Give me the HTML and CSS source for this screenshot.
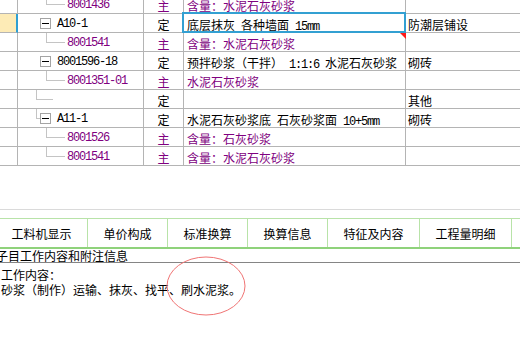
FILE: index.html
```html
<!DOCTYPE html>
<html>
<head>
<meta charset="utf-8">
<link rel="stylesheet" href="styles.css">
</head>
<body>
<div class="grid">
  <div class="row">
    <div class="c mark"></div>
    <div class="c tree child"><span class="elbow"></span><span class="code purple">8001436</span></div>
    <div class="c type purple">主</div>
    <div class="c name purple">含量：水泥石灰砂浆</div>
    <div class="c extra"></div>
  </div>
  <div class="row">
    <div class="c mark current"></div>
    <div class="c tree parent"><span class="box"></span><span class="code">A10-1</span></div>
    <div class="c type">定</div>
    <div class="c name selected">底层抹灰<span class="lat"> </span>各种墙面<span class="lat"> 15mm</span><span class="ring"></span><span class="flag"></span></div>
    <div class="c extra">防潮层铺设</div>
  </div>
  <div class="row">
    <div class="c mark"></div>
    <div class="c tree child"><span class="elbow"></span><span class="code purple">8001541</span></div>
    <div class="c type purple">主</div>
    <div class="c name purple">含量：水泥石灰砂浆</div>
    <div class="c extra"></div>
  </div>
  <div class="row">
    <div class="c mark"></div>
    <div class="c tree parent"><span class="box"></span><span class="code">8001596-18</span></div>
    <div class="c type">定</div>
    <div class="c name">预拌砂浆（干拌）<span class="lat"> 1:1:6 </span>水泥石灰砂浆</div>
    <div class="c extra">砌砖</div>
  </div>
  <div class="row">
    <div class="c mark"></div>
    <div class="c tree child"><span class="elbow"></span><span class="code purple">8001351-01</span></div>
    <div class="c type purple">主</div>
    <div class="c name purple">水泥石灰砂浆</div>
    <div class="c extra"></div>
  </div>
  <div class="row">
    <div class="c mark"></div>
    <div class="c tree outer"><span class="elbow long"></span></div>
    <div class="c type">定</div>
    <div class="c name"></div>
    <div class="c extra">其他</div>
  </div>
  <div class="row">
    <div class="c mark"></div>
    <div class="c tree outer"><span class="elbow short"></span><span class="box"></span><span class="code">A11-1</span></div>
    <div class="c type">定</div>
    <div class="c name">水泥石灰砂浆底<span class="lat"> </span>石灰砂浆面<span class="lat"> 10+5mm</span></div>
    <div class="c extra">砌砖</div>
  </div>
  <div class="row">
    <div class="c mark"></div>
    <div class="c tree child"><span class="elbow"></span><span class="code purple">8001526</span></div>
    <div class="c type purple">主</div>
    <div class="c name purple">含量：石灰砂浆</div>
    <div class="c extra"></div>
  </div>
  <div class="row">
    <div class="c mark"></div>
    <div class="c tree child"><span class="elbow"></span><span class="code purple">8001541</span></div>
    <div class="c type purple">主</div>
    <div class="c name purple">含量：水泥石灰砂浆</div>
    <div class="c extra"></div>
  </div>
</div>

<div class="tabs">
  <div class="tab first">工料机显示</div>
  <div class="tab">单价构成</div>
  <div class="tab">标准换算</div>
  <div class="tab">换算信息</div>
  <div class="tab wide">特征及内容</div>
  <div class="tab wide">工程量明细</div>
  <div class="tab rest"></div>
</div>

<div class="info-head">子目工作内容和附注信息</div>
<div class="info-body">
  <div class="line">工作内容：</div>
  <div class="line">砂浆（制作）运输、抹灰、找平、刷水泥浆。</div>
</div>

<svg class="circle" width="80" height="60" viewBox="0 0 80 60">
  <ellipse cx="40" cy="30" rx="39" ry="29" fill="none" stroke="#f07474" stroke-width="1"/>
</svg>
</body>
</html>
```
FILE: styles.css
```css
* { box-sizing: border-box; }
html, body { margin: 0; padding: 0; }
body {
  width: 520px;
  height: 358px;
  overflow: hidden;
  background: #fff;
  color: #000;
  font-family: "Noto Sans CJK SC", sans-serif;
  font-size: 12px;
  position: relative;
}
.grid {
  margin-top: -5px;
  height: 215px;
  border-bottom: 1px solid #dadada;
}
.row {
  display: grid;
  grid-template-columns: 18px 126px 40px 222px 1fr;
  height: 19px;
}
.c {
  height: 19px;
  border-right: 1px solid #b4b4b4;
  border-bottom: 1px solid #b4b4b4;
  padding-top: 2px;
  line-height: 17px;
  white-space: nowrap;
  overflow: hidden;
}
.c.extra { border-right: none; padding-left: 2px; }
.c.mark { padding: 0; }
.c.mark.current {
  background: #fdebb6;
  border-right: 2px solid #2f9fd2;
}
.c.type { text-align: center; }
.c.name { padding-left: 3px; }
.purple { color: #800080; }
.lat {
  font-family: "Liberation Mono", monospace;
  font-size: 12px;
  letter-spacing: -1.2px;
  white-space: pre;
}
.c.selected {
  position: relative;
  overflow: visible;
}
.ring {
  position: absolute;
  top: -2px;
  left: -2px;
  right: -1px;
  bottom: -1px;
  border: 2px solid #33a0d2;
}
.flag {
  position: absolute;
  top: 19px;
  right: -1px;
  width: 0;
  height: 0;
  border-top: 6px solid #ff1a1a;
  border-left: 6px solid transparent;
}
.tree {
  display: flex;
  align-items: flex-start;
  padding-top: 0;
}
.tree.child { padding-left: 28px; }
.tree.parent { padding-left: 22px; }
.tree.outer { padding-left: 18px; }
.elbow {
  flex: none;
  width: 19px;
  height: 10px;
  border-left: 1px solid #c4c4c4;
  border-bottom: 1px solid #c4c4c4;
}
.elbow.long { width: 17px; }
.elbow.short { width: 4px; }
.box {
  flex: none;
  width: 11px;
  height: 11px;
  margin-top: 4px;
  border: 1px solid #a4a4a4;
  display: flex;
  align-items: center;
  justify-content: center;
}
.box::after {
  content: "";
  width: 7px;
  height: 1px;
  background: #000;
}
.code {
  font-family: "Liberation Mono", monospace;
  font-size: 12px;
  letter-spacing: -1.2px;
  line-height: 17px;
  padding-top: 2px;
}
.child .code { margin-left: 2px; }
.parent .code, .outer .code { margin-left: 6px; }

.tabs {
  display: flex;
  margin-top: 8px;
  height: 31px;
  border-top: 1px solid #b8e3a8;
  border-bottom: 2px solid #8fd27b;
}
.tab {
  flex: none;
  width: 80px;
  border-right: 1px solid #b8e3a8;
  text-align: center;
  padding-top: 2px;
  line-height: 26px;
  font-size: 12px;
}
.tab.first { width: 88px; padding-right: 4px; }
.tab.wide { width: 92px; }
.tab.rest { flex: 1; border-right: none; }

.info-head {
  height: 14px;
  line-height: 13px;
  border-bottom: 1px solid #858585;
  text-indent: -4px;
  white-space: nowrap;
}
.info-body {
  padding-top: 4px;
  padding-left: 1px;
}
.line {
  height: 15px;
  line-height: 15px;
  white-space: nowrap;
}
.circle {
  position: absolute;
  left: 166px;
  top: 256px;
}
```
